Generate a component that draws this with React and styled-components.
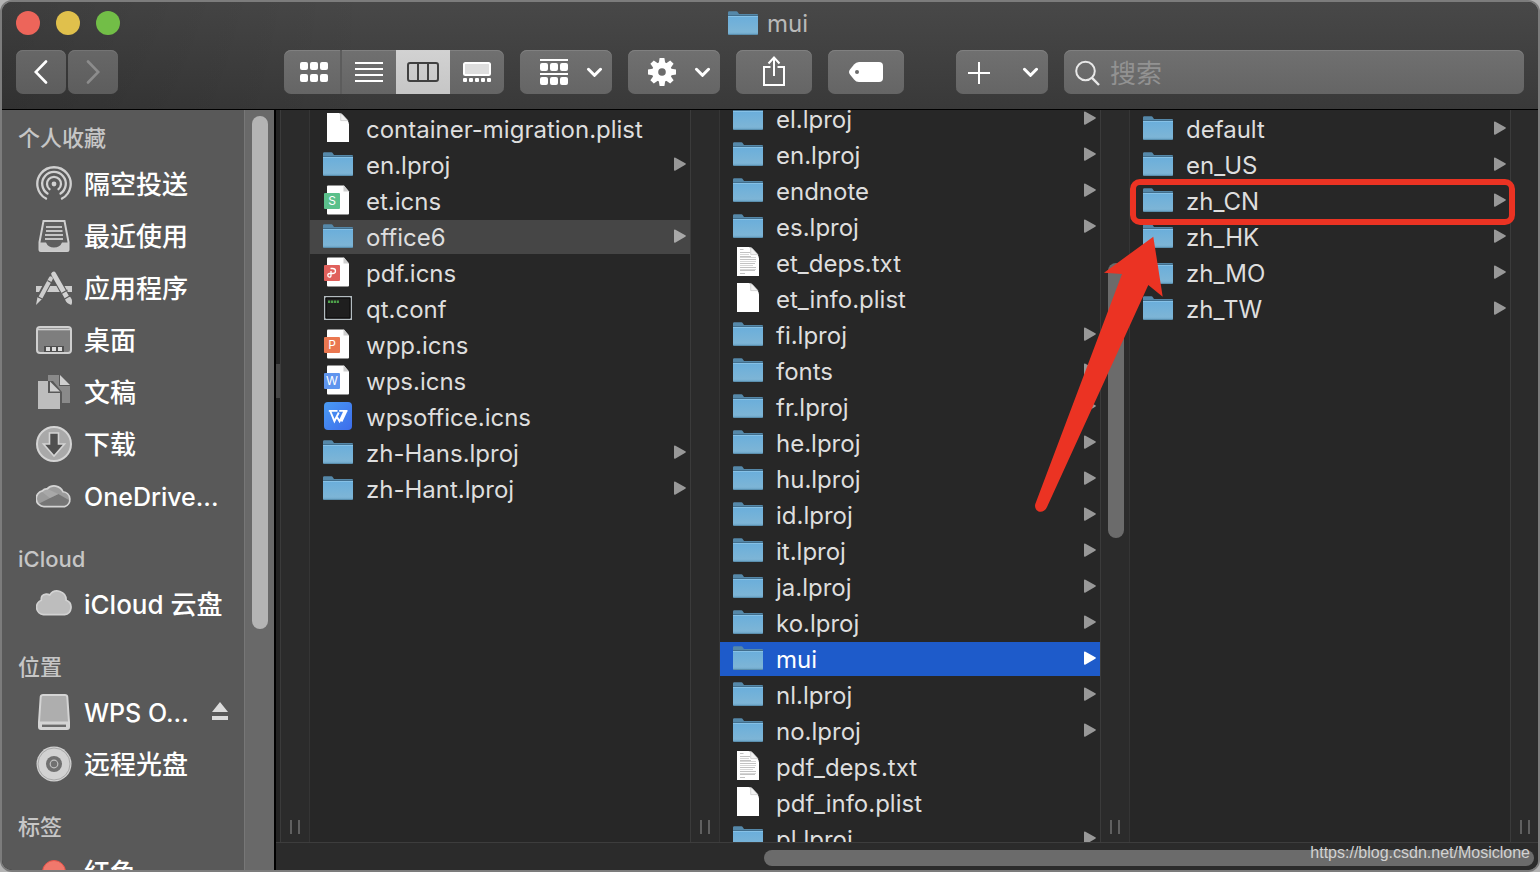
import React from "react";
import styled, { createGlobalStyle, css } from "styled-components";

const GlobalStyle = createGlobalStyle`
  *, *::before, *::after { box-sizing: border-box; }
  body { margin: 0; background: #b4b4b4; overflow: hidden; }
  button, input { font: inherit; color: inherit; }
  ul { list-style: none; margin: 0; padding: 0; }
`;

const Window = styled.div`
  position: relative;
  display: flex;
  flex-direction: column;
  height: 100vh;
  overflow: hidden;
  border: 2px solid #7c7c7c;
  border-radius: 12px;
  background: #272727;
  color: #dedede;
  font-family: Inter, "Noto Sans CJK SC", sans-serif;
  font-size: 24px;
`;

/* ---------- Header ---------- */

const Header = styled.header`
  flex: none;
  display: flex;
  flex-direction: column;
  gap: 8px;
  height: 108px;
  border-bottom: 1px solid #000;
  background: linear-gradient(90deg, rgba(0, 0, 0, 0.14), transparent 24%),
    linear-gradient(#484848, #393939);
`;

const TitleBar = styled.div`
  display: grid;
  grid-template-columns: 1fr auto 1fr;
  align-items: center;
  height: 40px;
  padding: 0 18px 0 14px;
`;

const Lights = styled.div`
  display: flex;
  gap: 16px;
`;

const Light = styled.button`
  width: 24px;
  height: 24px;
  padding: 0;
  border: 0;
  border-radius: 50%;
  background: ${(p) => p.$color};
`;

const Title = styled.h1`
  display: flex;
  align-items: center;
  gap: 9px;
  margin: 0;
  color: #b9b9b9;
  font-size: 24px;
  font-weight: 400;
  line-height: 40px;
`;

const TitleText = styled.span`
  padding-top: 2px;
`;

const Toolbar = styled.div`
  display: flex;
  gap: 16px;
  height: 44px;
  padding: 0 14px;
`;

const raised = css`
  border: 0;
  border-radius: 7px;
  background: linear-gradient(#707070, #656565);
  box-shadow: inset 0 1px #808080;
  color: #fff;
`;

const NavGroup = styled.div`
  display: flex;
  gap: 2px;
  margin-right: 150px;
`;

const NavButton = styled.button`
  ${raised}
  display: grid;
  place-items: center;
  width: 50px;
  padding: 0;
  background: linear-gradient(#676767, #5d5d5d);
  box-shadow: inset 0 1px #747474;
  color: ${(p) => (p.disabled ? "#8c8c8c" : "#fff")};
`;

const ViewSwitch = styled.div`
  ${raised}
  display: grid;
  grid-template-columns: 58px 1fr 1fr 1fr;
  width: 220px;
  overflow: hidden;
`;

const ViewButton = styled.button`
  display: grid;
  place-items: center;
  padding: 0 0 0 ${(p) => (p.$divided ? 4 : 0)}px;
  border: 0;
  border-right: ${(p) => (p.$divided ? "2px solid #5c5c5c" : "0")};
  background: ${(p) => (p["aria-pressed"] ? "linear-gradient(#d2d2d2, #c6c6c6)" : "transparent")};
  color: ${(p) => (p["aria-pressed"] ? "#404040" : "#fff")};
`;

const MenuButton = styled.button`
  ${raised}
  display: flex;
  align-items: center;
  justify-content: space-between;
  width: 92px;
  padding: 0 10px 0 ${(p) => (p.$tight ? 12 : 20)}px;
`;

const ToolButton = styled.button`
  ${raised}
  display: grid;
  place-items: center;
  width: 76px;
  padding: 0;
  margin-right: ${(p) => (p.$last ? 36 : 0)}px;
`;

const Search = styled.label`
  ${raised}
  flex: 1;
  display: flex;
  align-items: center;
  gap: 10px;
  min-width: 0;
  padding: 0 11px;
`;

const SearchInput = styled.input`
  flex: 1;
  min-width: 0;
  padding: 3px 0 0;
  border: 0;
  outline: 0;
  background: transparent;
  font-size: 26px;
  line-height: 40px;
  &::placeholder { color: #929292; opacity: 1; }
`;

/* ---------- Sidebar ---------- */

const Body = styled.div`
  flex: 1;
  display: flex;
  min-height: 0;
`;

const Sidebar = styled.nav`
  flex: none;
  width: 242px;
  overflow: hidden;
  background: #595959;
`;

const SectionTitle = styled.h2`
  height: ${(p) => (p.$first ? 48 : 56)}px;
  margin: 0;
  padding: ${(p) => (p.$first ? 8 : 17)}px 16px 0;
  color: #c6c6c6;
  font-size: 22px;
  font-weight: 500;
  line-height: 40px;
`;

const Place = styled.li`
  display: flex;
  align-items: center;
  height: 52px;
  padding: 0 16px 0 34px;
`;

const PlaceLink = styled.a`
  flex: 1;
  display: flex;
  align-items: center;
  gap: 12px;
  min-width: 0;
  color: #fff;
  font-size: ${(p) => (p.$latin ? 25 : 26)}px;
  font-weight: 500;
  line-height: 40px;
  white-space: nowrap;
  text-decoration: none;
  svg { flex: none; }
`;

const PlaceName = styled.span`
  padding-top: 2px;
`;

const EjectButton = styled.button`
  display: grid;
  padding: 0;
  border: 0;
  background: none;
`;

const SidebarTrack = styled.div`
  flex: none;
  width: 30px;
  padding: 6px 6px 0 7px;
  border-left: 1px solid #777;
  background: #696969;
`;

const SidebarThumb = styled.div`
  width: 16px;
  height: 68%;
  border-radius: 8px;
  background: #b4b4b4;
`;

/* ---------- Columns ---------- */

const Browser = styled.main`
  flex: 1;
  display: flex;
  flex-direction: column;
  min-width: 0;
  border-left: 2px solid #000;
`;

const Columns = styled.div`
  flex: 1;
  display: flex;
  min-height: 0;
  overflow: hidden;
`;

const Splitter = styled.div`
  flex: none;
  display: flex;
  flex-direction: column;
  justify-content: center;
  width: 4px;
  padding-bottom: 190px;
  background: #232323;
  &::after { content: ""; height: 34px; background: #444; }
`;

const Strip = styled.div`
  flex: none;
  display: flex;
  flex-direction: column;
  width: 30px;
  padding: 0 0 8px 7px;
  border-left: 1px solid #3b3b3b;
  border-right: 1px solid #353535;
  background: #2b2b2b;
`;

const Grip = styled.div`
  width: 10px;
  height: 14px;
  margin: auto 0 0 2px;
  border: solid #606060;
  border-width: 0 2px;
`;

const ColumnThumb = styled.div`
  width: 16px;
  height: 275px;
  margin-top: 153px;
  border-radius: 8px;
  background: #6b6b6b;
`;

const Column = styled.section`
  position: relative;
  flex: 1 0 380px;
  min-height: 0;
`;

const ListClip = styled.div`
  height: 100%;
  overflow: hidden;
`;

const List = styled.ul`
  display: flex;
  flex-direction: column;
  gap: 2px;
  margin-top: ${(p) => 2 - p.$scrolled}px;
`;

const rowColors = { active: "#1e5bca", open: "#464646" };

const Row = styled.button`
  display: flex;
  align-items: center;
  gap: 12px;
  width: 100%;
  height: 34px;
  padding: 0 4px 0 12px;
  border: 0;
  background: ${(p) => rowColors[p.$state] || "transparent"};
  color: ${(p) => (p.$state === "active" ? "#fff" : "#dedede")};
  text-align: left;
`;

const FileIcon = styled.span`
  flex: none;
  display: grid;
  place-items: center;
  width: 32px;
  height: 34px;
  padding-bottom: 2px;
`;

const FileName = styled.span`
  flex: 1;
  padding-top: 2px;
  line-height: 32px;
  white-space: nowrap;
`;

const Triangle = styled.svg`
  flex: none;
  fill: ${(p) => (p.$state === "active" ? "#fff" : p.$state === "open" ? "#a8a8a8" : "#989898")};
`;

const BottomTrack = styled.div`
  flex: none;
  display: flex;
  justify-content: flex-end;
  height: 28px;
  padding: 7px 4px;
  border-top: 1px solid #3d3d3d;
  background: #2b2b2b;
`;

const BottomThumb = styled.div`
  width: calc(61% + 5px);
  height: 16px;
  border-radius: 8px;
  background: #6b6b6b;
`;

/* ---------- Annotations over the columns ---------- */

const Highlight = styled.div`
  position: absolute;
  z-index: 1;
  top: 69px;
  left: 0;
  right: -5px;
  height: 46px;
  border: 6px solid #eb3323;
  border-radius: 10px;
  pointer-events: none;
`;

const Arrow = styled.svg`
  position: absolute;
  z-index: 1;
  top: 120px;
  left: -100px;
  pointer-events: none;
`;

const Watermark = styled.div`
  position: absolute;
  right: 8px;
  bottom: 7px;
  color: #d2d2d2;
  font-family: "Liberation Sans", Arial, sans-serif;
  font-size: 16px;
  line-height: 20px;
`;

/* ---------- Icons ---------- */

const Folder = () => (
  <svg width="30" height="24" viewBox="0 0 30 24">
    <defs>
      <linearGradient id="front" x1="0" y1="0" x2="0" y2="1">
        <stop offset="0" stopColor="#6aaedb" />
        <stop offset="0.85" stopColor="#7db5d6" />
        <stop offset="1" stopColor="#659fc2" />
      </linearGradient>
    </defs>
    <path d="M0 1.5Q0 .3 1.3.3H8.3Q9.3.3 10 1.5L11 3H29Q30 3 30 4V8H0Z" fill="#5588a9" />
    <path d="M0 4H30V5.5H0Z" fill="#416e8c" />
    <path d="M0 5H30V22.6Q30 24 28.8 24H1.2Q0 24 0 22.6Z" fill="url(#front)" />
    <path d="M0 5.5H30" stroke="#86c1e6" />
    <path d="M.5 23.5H29.5" stroke="#5b8fae" />
  </svg>
);

const Page = ({ lines }) => (
  <svg width="22" height="30" viewBox="0 0 22 30">
    <path d="M0 0H11.5Q14 0 15.8 2L20 6.8Q22 9 22 11.5V29H0Z" fill="#fff" />
    <path d="M13.7.6V7.6H21L20 6.6 15 1.2Z" fill="#f3f3f3" stroke="#c4c4c4" strokeWidth=".7" />
    {lines && (
      <g strokeWidth="1">
        <path d="M3 2.5H6.500M3 5.500H13M3 9.500H14M3 12.500H19M3 16.500H18M3 20.500H19M3 23.500H18M3 26.500H8" stroke="#c2c2c2" />
        <path d="M3 7.500H12M3 10.500H19M3 14.500H19M3 18.500H16M3 22.500H19" stroke="#d6d6d6" />
      </g>
    )}
  </svg>
);

const Badge = ({ color, letter, children }) => (
  <svg width="28" height="30" viewBox="0 0 28 30">
    <path d="M4 .5H20L25 6.5V28.5Q25 29.5 24 29.5H4Q3 29.5 3 28.5V1.5Q3 .5 4 .5Z" fill="#fff" />
    <path d="M19.5.5V6.5H25Z" fill="#cfcfcf" />
    <rect y="8" width="16" height="16" rx="1" fill={color} />
    {letter && (
      <text x="8" y="20" fill="#fff" fontFamily="Inter, sans-serif" fontSize="12" textAnchor="middle">
        {letter}
      </text>
    )}
    {children}
  </svg>
);

const Terminal = () => (
  <svg width="28" height="24" viewBox="0 0 28 24">
    <rect x=".7" y=".7" width="26.6" height="22.6" fill="#1f1f1f" stroke="#b3bcc0" strokeWidth="1.4" />
    <path d="M2 2H26V22H2Z" fill="none" stroke="#080808" />
    <path d="M4 5.7H15" stroke="#4ea24b" strokeWidth="2.4" strokeDasharray="2.2 .7" />
  </svg>
);

const WpsLogo = () => (
  <svg width="28" height="28" viewBox="0 0 28 28">
    <defs>
      <linearGradient id="wps" x1="0" y1="0" x2="1" y2="1">
        <stop offset="0" stopColor="#4a9bf3" />
        <stop offset="1" stopColor="#3c6cec" />
      </linearGradient>
    </defs>
    <rect width="28" height="28" rx="4" fill="url(#wps)" />
    <path d="M4.800 8.900H13.500M6.200 9 10.400 19.200 14.800 10.500M12.600 14.500 15.600 19.200 20.500 9M15.200 8.900H23.500M22.400 9 17.500 19.500" fill="none" stroke="#fff" strokeWidth="1.900" />
  </svg>
);

const fileIcons = {
  folder: <Folder />,
  page: <Page />,
  text: <Page lines />,
  et: <Badge color="#5bc08b" letter="S" />,
  wpp: <Badge color="#ea7750" letter="P" />,
  wps: <Badge color="#5f95ee" letter="W" />,
  pdf: (
    <Badge color="#e0605c">
      <path d="M6.500 11.500H8.500Q11.500 11.500 11.500 14T8.500 16.500H5.500Q3.800 16.500 3.800 18.300T5.400 20.200Q7 20.200 7 18.500V14" fill="none" stroke="#fff" strokeWidth="1.300" />
    </Badge>
  ),
  terminal: <Terminal />,
  office: <WpsLogo />,
};

const Chevron = () => (
  <svg width="16" height="10" viewBox="0 0 16 10" fill="none" stroke="currentColor" strokeWidth="3" strokeLinecap="round">
    <path d="M2.500 2.300 8.500 8.300 14.500 2.300" />
  </svg>
);

const Squares = ({ y }) =>
  [0, 10, 20].map((x) => <rect key={x} x={x} y={y} width="8" height="8" rx="2" />);

const GridIcon = () => (
  <svg width="28" height="20" fill="currentColor">
    <Squares y={0} />
    <Squares y={12} />
  </svg>
);

const LinesIcon = () => (
  <svg width="28" height="20" stroke="currentColor" strokeWidth="2">
    <path d="M0 1H28M0 7H28M0 13H28M0 19H28" />
  </svg>
);

const ColumnsIcon = () => (
  <svg width="32" height="20" fill="none" stroke="currentColor" strokeWidth="2">
    <rect x="1" y="1" width="30" height="18" rx="2" />
    <path d="M11 1V19M21 1V19" />
  </svg>
);

const GalleryIcon = () => (
  <svg width="28" height="20" fill="currentColor">
    <rect x="1" y="1" width="26" height="12" rx="1.5" fill="#dedede" stroke="currentColor" strokeWidth="2" />
    {[0, 6, 12, 18, 24].map((x) => <rect key={x} x={x} y="16" width="4" height="4" rx="1" />)}
  </svg>
);

const GroupIcon = () => (
  <svg width="28" height="26" fill="currentColor">
    <rect width="28" height="2" />
    <Squares y={4} />
    <rect y="14" width="28" height="2" />
    <Squares y={18} />
  </svg>
);

const GearIcon = () => (
  <svg width="28" height="28" viewBox="-14 -14 28 28" fill="currentColor">
    {[0, 45, 90, 135].map((a) => (
      <path key={a} transform={`rotate(${a})`} d="M-2.4-14H2.4L3.4-8V8L2.4 14H-2.4L-3.4 8V-8Z" />
    ))}
    <circle r="10" />
    <circle r="3.8" fill="#6b6b6b" />
  </svg>
);

const ShareIcon = () => (
  <svg width="22" height="32" viewBox="0 0 22 32" fill="none" stroke="currentColor" strokeWidth="2">
    <path d="M7.5 11H1V29H21V11H14.5M11 20V1.5M5.5 7.5 11 1.5 16.5 7.5" />
  </svg>
);

const TagIcon = () => (
  <svg width="34" height="20" viewBox="0 0 34 20">
    <path d="M10 0H30Q34 0 34 4V16Q34 20 30 20H10Q7 20 5 17.5L1 12.5Q-1 10 1 7.5L5 2.5Q7 0 10 0Z" fill="currentColor" />
    <circle cx="8" cy="10" r="2" fill="#6b6b6b" />
  </svg>
);

const PlusIcon = () => (
  <svg width="22" height="24" stroke="currentColor" strokeWidth="2">
    <path d="M11 2V24M0 13H22" />
  </svg>
);

const SearchIcon = () => (
  <svg width="25" height="28" viewBox="0 0 25 28" fill="none" stroke="#e8e8e8" strokeWidth="2">
    <circle cx="10.5" cy="13" r="9.3" />
    <path d="M17 19.800 24 27" strokeWidth="2.400" />
  </svg>
);

const NavArrow = ({ forward }) => (
  <svg width="14" height="24" viewBox="0 0 14 24" fill="none" stroke="currentColor" strokeWidth="2.6" strokeLinecap="round">
    <path d={forward ? "M2 1.5 12.3 12 2 22.5" : "M12 1.5 1.7 12 12 22.5"} />
  </svg>
);

const SideSvg = ({ children, viewBox = "0 0 36 36" }) => (
  <svg width="36" height="36" viewBox={viewBox} fill="none">{children}</svg>
);

const placeIcons = {
  airdrop: (
    <SideSvg>
      <g stroke="#d0d0d0" strokeWidth="2.3" strokeLinecap="round">
        <path d="M10 32.6A16.7 16.7 0 1 1 26 32.6" />
        <path d="M11.5 27.5A11.8 11.8 0 1 1 24.5 27.5" />
        <path d="M13.5 23.2A7 7 0 1 1 22.5 23.2" />
      </g>
      <circle cx="18" cy="18" r="2.4" fill="#d0d0d0" />
    </SideSvg>
  ),
  recent: (
    <SideSvg>
      <path d="M7.5 3H28.5L32.5 24V31.5Q32.5 33 31 33H5Q3.5 33 3.5 31.5V24Z" fill="#5f5f5f" stroke="#d0d0d0" strokeWidth="2" />
      <path d="M3.5 24.5H10Q12 29.5 18 29.5T26 24.5H32.5V32Q32.5 33.5 31 33.5H5Q3.5 33.5 3.5 32Z" fill="#c9c9c9" />
      <path d="M10 9H26M10 13H26.5M9 17H27M9 21H27" stroke="#c4c4c4" strokeWidth="1.8" />
    </SideSvg>
  ),
  apps: (
    <SideSvg>
      <path d="M0 16H36V22H0Z" fill="#cccccc" />
      <path d="M15 7 3 29.500M17.500 3.500 32 29.500" stroke="#595959" strokeWidth="7" />
      <path d="M14.800 8.500 4.500 27.500" stroke="#cccccc" strokeWidth="4.200" strokeLinecap="round" />
      <path d="M17.600 4 31 27.500" stroke="#d2d2d2" strokeWidth="4.800" strokeLinecap="round" />
      <path d="M1.500 27 5.500 29.500 0 35Z" fill="#d0d0d0" />
      <path d="M29 29.500 34 26.500Q37.500 31 35.200 35 30.500 33.500 29 29.500Z" fill="#cccccc" />
      <path d="M11.500 10.500 16 13M1.500 26.500 7 29.500M25.500 23.500 31.500 20M28.500 29 34.500 25.500" stroke="#595959" strokeWidth="1.200" />
    </SideSvg>
  ),
  desktop: (
    <SideSvg>
      <rect x="1" y="5" width="34" height="26" rx="3" fill="#7e7e7e" stroke="#cfcfcf" strokeWidth="2" />
      <path d="M2 7.5H34" stroke="#cfcfcf" strokeWidth="1.6" />
      <rect x="8" y="24" width="20" height="6" fill="#4e4e4e" />
      <path d="M10 25H14V29H10ZM16 25H20V29H16ZM22 25H26V29H22Z" fill="#dcdcdc" />
    </SideSvg>
  ),
  documents: (
    <SideSvg>
      <path d="M12 1H23V12H34V29H26V18L17 7H12Z" fill="#8a8a8a" />
      <path d="M24 1 34 11H24Z" fill="#cfcfcf" />
      <path d="M2 7H12V19H24V35H2Z" fill="#bdbdbd" />
      <path d="M14 7.5 24 17.5H14Z" fill="#cfcfcf" />
    </SideSvg>
  ),
  downloads: (
    <SideSvg>
      <circle cx="18" cy="18" r="17" fill="#a9a9a9" stroke="#d4d4d4" strokeWidth="2" />
      <path d="M13.5 7H22.5V18H28.5L18 30 7.5 18H13.5Z" fill="#4f4f4f" stroke="#d4d4d4" strokeWidth="1.6" />
    </SideSvg>
  ),
  onedrive: (
    <SideSvg viewBox="1 2 34 34">
      <path d="M8.500 29A7.500 7.500 0 0 1 7 14.200Q9 12 11.500 12.300A9.200 9.200 0 0 1 26.500 15A7.200 7.200 0 0 1 28 29Z" fill="#9b9b9b" />
      <path d="M4 26 22 17 34 24Q32 29 28 29H8Z" fill="#767676" />
      <path d="M6 14.500 12 12.500 22 17 14 21Z" fill="#a8a8a8" />
      <path d="M8.500 29A7.500 7.500 0 0 1 7 14.200Q9 12 11.500 12.300A9.200 9.200 0 0 1 26.500 15A7.200 7.200 0 0 1 28 29Z" stroke="#d4d4d4" strokeWidth="1.600" />
    </SideSvg>
  ),
  icloud: (
    <SideSvg viewBox="1 2 34 34">
      <path d="M8 29A7 7 0 0 1 6 15.500Q5.500 10 10.500 9.600 12.500 9.500 14 10.500A8.500 8.500 0 0 1 29.500 15.500A7 7 0 0 1 28 29Z" fill="#bdbdbd" stroke="#d2d2d2" strokeWidth="1.600" />
    </SideSvg>
  ),
  drive: (
    <SideSvg>
      <path d="M7 1H29Q31 1 31.300 3L33 28V33Q33 35 31 35H5Q3 35 3 33V28L4.700 3Q5 1 7 1Z" fill="#aeaeae" stroke="#d4d4d4" strokeWidth="2" />
      <path d="M3 27.500H33V34H3Z" fill="#d4d4d4" />
      <path d="M6 31.800H30" stroke="#6b6b6b" strokeWidth="2.400" />
    </SideSvg>
  ),
  disc: (
    <SideSvg>
      <circle cx="18" cy="18" r="17.500" fill="#d2d2d2" />
      <circle cx="18" cy="18" r="16" stroke="#a8a8a8" />
      <circle cx="18" cy="18" r="8" fill="#707070" />
      <circle cx="18" cy="18" r="3.800" stroke="#c0c0c0" strokeWidth="1.200" />
    </SideSvg>
  ),
  red: (
    <SideSvg>
      <circle cx="18" cy="18" r="11.500" fill="#f0786c" stroke="#e6544a" />
    </SideSvg>
  ),
};

/* ---------- Data ---------- */

const sections = [
  {
    title: "个人收藏",
    places: [
      { icon: "airdrop", name: "隔空投送" },
      { icon: "recent", name: "最近使用" },
      { icon: "apps", name: "应用程序" },
      { icon: "desktop", name: "桌面" },
      { icon: "documents", name: "文稿" },
      { icon: "downloads", name: "下载" },
      { icon: "onedrive", name: "OneDrive...", latin: true },
    ],
  },
  { title: "iCloud", places: [{ icon: "icloud", name: "iCloud 云盘" }] },
  {
    title: "位置",
    places: [
      { icon: "drive", name: "WPS O...", latin: true, ejectable: true },
      { icon: "disc", name: "远程光盘" },
    ],
  },
  { title: "标签", places: [{ icon: "red", name: "红色" }] },
];

const folders = (...names) => names.map((name) => ({ name, icon: "folder" }));

const support = [
  { name: "container-migration.plist", icon: "page" },
  ...folders("en.lproj"),
  { name: "et.icns", icon: "et" },
  { name: "office6", icon: "folder", state: "open" },
  { name: "pdf.icns", icon: "pdf" },
  { name: "qt.conf", icon: "terminal" },
  { name: "wpp.icns", icon: "wpp" },
  { name: "wps.icns", icon: "wps" },
  { name: "wpsoffice.icns", icon: "office" },
  ...folders("zh-Hans.lproj", "zh-Hant.lproj"),
];

const office = [
  ...folders("el.lproj", "en.lproj", "endnote", "es.lproj"),
  { name: "et_deps.txt", icon: "text" },
  { name: "et_info.plist", icon: "page" },
  ...folders("fi.lproj", "fonts", "fr.lproj", "he.lproj", "hu.lproj", "id.lproj", "it.lproj", "ja.lproj", "ko.lproj"),
  { name: "mui", icon: "folder", state: "active" },
  ...folders("nl.lproj", "no.lproj"),
  { name: "pdf_deps.txt", icon: "text" },
  { name: "pdf_info.plist", icon: "page" },
  ...folders("pl.lproj"),
];

const languages = folders("default", "en_US", "zh_CN", "zh_HK", "zh_MO", "zh_TW");

const FileColumn = ({ files, scrolled = 0, label, children }) => (
  <Column aria-label={label}>
    <ListClip>
      <List $scrolled={scrolled}>
        {files.map((f) => (
          <li key={f.name}>
            <Row type="button" $state={f.state}>
              <FileIcon>{fileIcons[f.icon]}</FileIcon>
              <FileName>{f.name}</FileName>
              {f.icon === "folder" && (
                <Triangle $state={f.state} width="12" height="16" viewBox="0 0 12 16">
                  <path d="M0 1.500Q0 0 1.500.700L11.300 6.300Q12.500 7 11.300 7.700L1.500 13.500Q0 14.200 0 12.700Z" />
                </Triangle>
              )}
            </Row>
          </li>
        ))}
      </List>
    </ListClip>
    {children}
  </Column>
);

export default function App() {
  return (
    <>
      <GlobalStyle />
      <Window>
        <Header>
          <TitleBar>
            <Lights>
              <Light type="button" aria-label="关闭" $color="#ed655a" />
              <Light type="button" aria-label="最小化" $color="#e0c04c" />
              <Light type="button" aria-label="缩放" $color="#72be47" />
            </Lights>
            <Title><Folder /><TitleText>mui</TitleText></Title>
          </TitleBar>
          <Toolbar>
            <NavGroup>
              <NavButton type="button" aria-label="后退"><NavArrow /></NavButton>
              <NavButton type="button" aria-label="前进" disabled><NavArrow forward /></NavButton>
            </NavGroup>
            <ViewSwitch>
              <ViewButton type="button" aria-label="图标" aria-pressed={false} $divided><GridIcon /></ViewButton>
              <ViewButton type="button" aria-label="列表" aria-pressed={false}><LinesIcon /></ViewButton>
              <ViewButton type="button" aria-label="分栏" aria-pressed><ColumnsIcon /></ViewButton>
              <ViewButton type="button" aria-label="画廊" aria-pressed={false}><GalleryIcon /></ViewButton>
            </ViewSwitch>
            <MenuButton type="button" aria-label="分组"><GroupIcon /><Chevron /></MenuButton>
            <MenuButton type="button" aria-label="操作"><GearIcon /><Chevron /></MenuButton>
            <ToolButton type="button" aria-label="共享"><ShareIcon /></ToolButton>
            <ToolButton type="button" aria-label="编辑标签" $last><TagIcon /></ToolButton>
            <MenuButton type="button" aria-label="新建" $tight><PlusIcon /><Chevron /></MenuButton>
            <Search>
              <SearchIcon />
              <SearchInput type="text" aria-label="搜索" placeholder="搜索" />
            </Search>
          </Toolbar>
        </Header>
        <Body>
          <Sidebar>
            {sections.map((s, i) => (
              <section key={s.title}>
                <SectionTitle $first={i === 0}>{s.title}</SectionTitle>
                <ul>
                  {s.places.map((p) => (
                    <Place key={p.name}>
                      <PlaceLink href="#" $latin={p.latin}>
                        {placeIcons[p.icon]}
                        <PlaceName>{p.name}</PlaceName>
                      </PlaceLink>
                      {p.ejectable && (
                        <EjectButton type="button" aria-label="推出">
                          <svg width="16" height="20" fill="#dcdcdc"><path d="M8 0 16 10H0ZM0 14H16V18H0Z" /></svg>
                        </EjectButton>
                      )}
                    </Place>
                  ))}
                </ul>
              </section>
            ))}
          </Sidebar>
          <SidebarTrack><SidebarThumb /></SidebarTrack>
          <Browser>
            <Columns>
              <Splitter />
              <Strip><Grip /></Strip>
              <FileColumn files={support} label="support" />
              <Strip><Grip /></Strip>
              <FileColumn files={office} scrolled={10} label="office6" />
              <Strip><ColumnThumb /><Grip /></Strip>
              <FileColumn files={languages} label="mui">
                <Highlight />
                <Arrow width="140" height="290" viewBox="0 0 140 290">
                  <path d="M123.300 6.700 74 42.700 92 44 5.300 274Q4 279 8.500 281.500 14 283 17 277L118.300 55 132.700 66.700Z" fill="#eb3323" />
                </Arrow>
              </FileColumn>
              <Strip><Grip /></Strip>
            </Columns>
            <BottomTrack><BottomThumb /></BottomTrack>
          </Browser>
        </Body>
        <Watermark>https://blog.csdn.net/Mosiclone</Watermark>
      </Window>
    </>
  );
}
